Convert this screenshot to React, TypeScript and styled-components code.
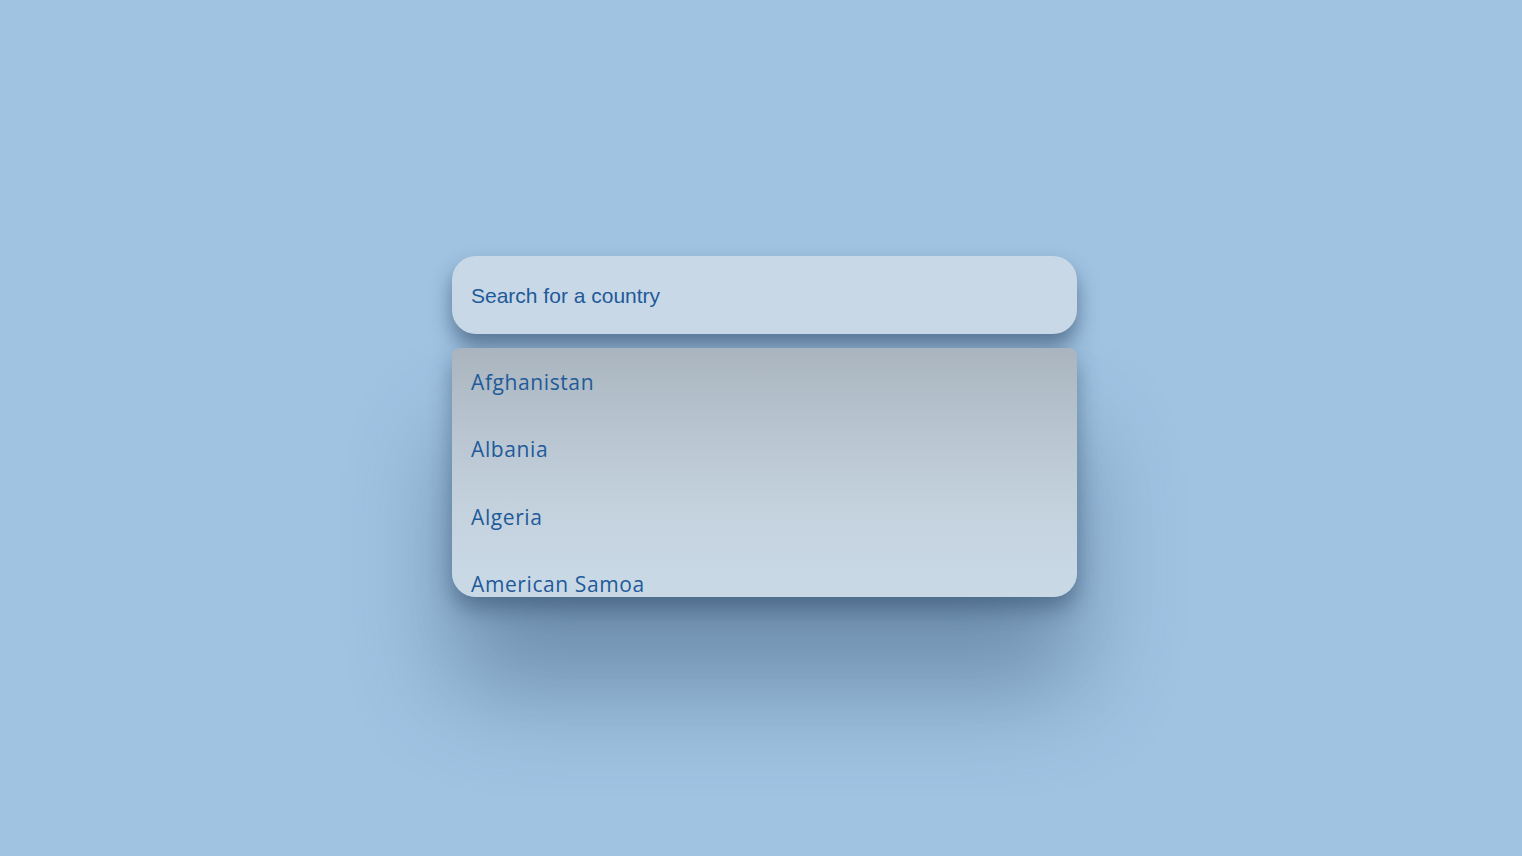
import React from "react";
import styled, { createGlobalStyle } from "styled-components";

const Global = createGlobalStyle`
  html, body { margin: 0; padding: 0; background: #a0c3e2; }
  body { font-family: "Open Sans", "Noto Sans", sans-serif; }
`;

const Page = styled.main`
  min-height: 856px;
  display: flex;
  align-items: center;
  justify-content: center;
  padding: 0 0 3px 7px;
  box-sizing: border-box;
`;

const Widget = styled.div`
  width: 625px;
  display: flex;
  flex-direction: column;
  gap: 14px;
`;

const SearchInput = styled.input`
  height: 78px;
  box-sizing: border-box;
  border: none;
  outline: none;
  border-radius: 24px;
  background: #c8d8e6;
  padding: 2px 19px 0;
  font-family: "Liberation Sans", Arial, sans-serif;
  font-size: 21px;
  color: #1f5a99;
  box-shadow: 0 12px 20px rgba(30, 55, 85, 0.55);
  &::placeholder { color: #1f5a99; opacity: 1; }
`;

const List = styled.ul`
  margin: 0;
  padding: 0;
  list-style: none;
  height: 249px;
  overflow: hidden;
  border-radius: 8px 8px 24px 24px;
  background: linear-gradient(to bottom, #a9b4be 0%, #b9c6d1 35%, #c4d2de 65%, #c9d8e5 90%);
  box-shadow:
    0 90px 100px rgba(40, 70, 100, 0.42),
    0 12px 22px rgba(30, 55, 85, 0.45);
`;

const Item = styled.li`
  height: 67.5px;
  display: flex;
  align-items: center;
  padding: 0 19px;
  font-family: "Open Sans", "Noto Sans", sans-serif;
  font-size: 21px;
  letter-spacing: 0.6px;
  color: #1f5a99;
`;

const countries = ["Afghanistan", "Albania", "Algeria", "American Samoa"];

export default function App() {
  return (
    <>
      <Global />
      <Page>
        <Widget>
          <SearchInput placeholder="Search for a country" />
          <List>
            {countries.map((c) => (
              <Item key={c}>{c}</Item>
            ))}
          </List>
        </Widget>
      </Page>
    </>
  );
}
